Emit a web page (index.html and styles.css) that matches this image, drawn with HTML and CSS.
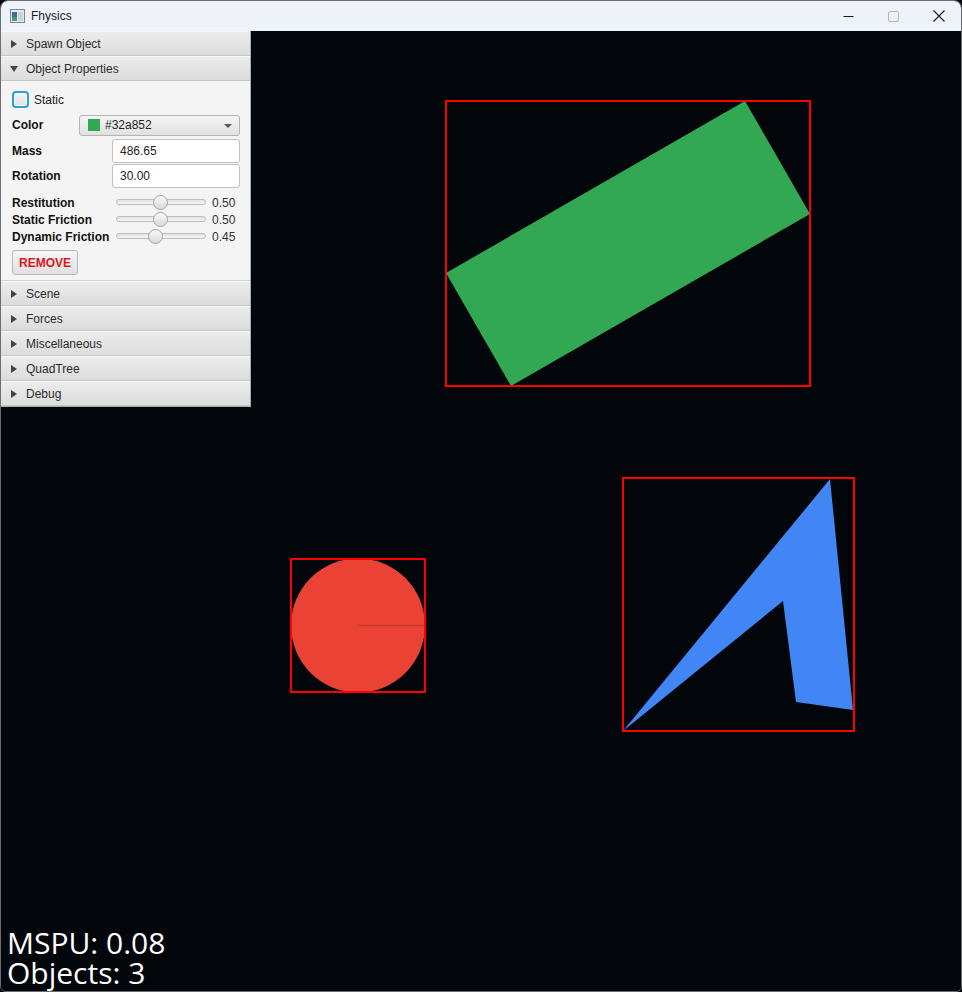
FILE: index.html
```html
<!DOCTYPE html>
<html>
<head>
<meta charset="utf-8">
<link rel="stylesheet" href="styles.css">
</head>
<body>
<div class="window">
  <div class="titlebar">
    <div class="app">
      <svg class="appicon" width="15" height="14" viewBox="0 0 15 14">
        <rect x="0.5" y="0.5" width="14" height="13" fill="#e6eaf0" stroke="#7d8590"/>
        <rect x="2" y="3" width="5" height="9" fill="#3f6e8c"/>
        <rect x="2" y="8" width="5" height="4" fill="#4e9a6a"/>
        <rect x="8" y="3" width="5" height="9" fill="#c9d2dc"/>
      </svg>
      <span class="apptitle">Fhysics</span>
    </div>
    <div class="controls">
      <span class="ctl"><svg width="11" height="11" viewBox="0 0 11 11"><path d="M0.5 5.5H10.5" stroke="#1a1a1a" stroke-width="1"/></svg></span>
      <span class="ctl"><svg width="11" height="11" viewBox="0 0 11 11"><rect x="0.5" y="0.5" width="10" height="10" rx="1.5" fill="none" stroke="#b5b5b5"/></svg></span>
      <span class="ctl"><svg width="12" height="12" viewBox="0 0 12 12"><path d="M0.5 0.5L11.5 11.5M11.5 0.5L0.5 11.5" stroke="#1a1a1a" stroke-width="1.1"/></svg></span>
    </div>
  </div>
  <div class="canvas">
    <svg class="scene" width="960" height="960" viewBox="1 31 960 960">
      <polygon points="446,273 745,101 810,214 511,386" fill="#32a852"/>
      <rect x="446" y="101" width="364" height="285" fill="none" stroke="#ff0000" stroke-width="2"/>
      <circle cx="358" cy="625.5" r="67" fill="#ea4335"/>
      <line x1="358" y1="625.5" x2="425" y2="625.5" stroke="#c33a2e" stroke-width="1.5"/>
      <rect x="291" y="559" width="134" height="133" fill="none" stroke="#ff0000" stroke-width="2"/>
      <polygon points="623,731 830,479 853,710 796,702 783,601" fill="#4285f4"/>
      <rect x="623" y="478" width="231" height="253" fill="none" stroke="#ff0000" stroke-width="2"/>
    </svg>

    <div class="panel">
      <div class="pane-title"><span class="arrow right"></span>Spawn Object</div>
      <div class="pane-title"><span class="arrow down"></span>Object Properties</div>
      <div class="pane-content">
        <div class="check-row">
          <span class="checkbox"></span>
          <span class="check-label">Static</span>
        </div>
        <div class="form-row color-row">
          <span class="lbl">Color</span>
          <div class="picker">
            <span class="swatch"></span>
            <span class="picker-text">#32a852</span>
            <span class="picker-arrow"></span>
          </div>
        </div>
        <div class="form-row field-row">
          <span class="lbl">Mass</span>
          <div class="field">486.65</div>
        </div>
        <div class="form-row field-row">
          <span class="lbl">Rotation</span>
          <div class="field">30.00</div>
        </div>
        <div class="sliders">
          <div class="slider-row">
            <span class="lbl">Restitution</span>
            <div class="slider"><span class="track"></span><span class="thumb" style="left: 37px"></span></div>
            <span class="val">0.50</span>
          </div>
          <div class="slider-row">
            <span class="lbl">Static Friction</span>
            <div class="slider"><span class="track"></span><span class="thumb" style="left: 37px"></span></div>
            <span class="val">0.50</span>
          </div>
          <div class="slider-row">
            <span class="lbl">Dynamic Friction</span>
            <div class="slider"><span class="track"></span><span class="thumb" style="left: 32px"></span></div>
            <span class="val">0.45</span>
          </div>
        </div>
        <button class="remove">REMOVE</button>
      </div>
      <div class="pane-title"><span class="arrow right"></span>Scene</div>
      <div class="pane-title"><span class="arrow right"></span>Forces</div>
      <div class="pane-title"><span class="arrow right"></span>Miscellaneous</div>
      <div class="pane-title"><span class="arrow right"></span>QuadTree</div>
      <div class="pane-title"><span class="arrow right"></span>Debug</div>
    </div>

    <div class="stats">
      <div class="stat">MSPU: 0.08</div>
      <div class="stat">Objects: 3</div>
    </div>
  </div>
</div>
</body>
</html>
```
FILE: styles.css
```css
* { box-sizing: border-box; }
html, body {
  margin: 0;
  padding: 0;
  background: #03060b;
  width: 962px;
  height: 992px;
  overflow: hidden;
}
.window {
  width: 962px;
  height: 992px;
  border: 1px solid #6b6d70;
  border-radius: 8px 8px 6px 6px;
  overflow: hidden;
  display: flex;
  flex-direction: column;
  font-family: "Liberation Sans", Arial, sans-serif;
}
.titlebar {
  height: 30px;
  flex: none;
  background: #eef3fa;
  display: flex;
  align-items: center;
  justify-content: space-between;
}
.app {
  display: flex;
  align-items: center;
  padding-left: 9px;
  gap: 6px;
}
.appicon { display: block; }
.apptitle {
  font-size: 12px;
  color: #1b1b1b;
}
.controls {
  display: flex;
  height: 30px;
}
.ctl {
  width: 45px;
  height: 30px;
  display: flex;
  align-items: center;
  justify-content: center;
}
.ctl svg { display: block; }
.canvas {
  position: relative;
  flex: 1;
  background: #03060b;
}
.scene {
  position: absolute;
  left: 0;
  top: 0;
}
.panel {
  position: absolute;
  left: 0;
  top: 0;
  width: 250px;
  background: #f4f4f4;
  border-right: 1px solid #a9a9a9;
  border-bottom: 1px solid #a9a9a9;
  font-size: 12px;
  color: #111;
}
.pane-title {
  height: 25px;
  display: flex;
  align-items: center;
  padding-left: 10px;
  background: linear-gradient(#ececec, #dcdcdc);
  border-top: 1px solid #f7f7f7;
  border-bottom: 1px solid #c6c6c6;
  color: #2b2b2b;
  font-size: 12px;
}
.arrow {
  width: 0;
  height: 0;
  margin-right: 9px;
}
.arrow.right {
  border-top: 4px solid transparent;
  border-bottom: 4px solid transparent;
  border-left: 6px solid #444;
}
.arrow.down {
  border-left: 4px solid transparent;
  border-right: 4px solid transparent;
  border-top: 6px solid #444;
  margin-left: -1px;
  margin-right: 8px;
}
.pane-content {
  height: 200px;
  padding: 9px 10px 0 11px;
  background: #f4f4f4;
  border-bottom: 1px solid #d2d2d2;
}
.check-row {
  display: flex;
  align-items: center;
  height: 19px;
  gap: 5px;
}
.checkbox {
  width: 17px;
  height: 17px;
  border: 2px solid #2f9fd6;
  border-radius: 4px;
  background: linear-gradient(#f2f2f2, #e2e2e2);
  box-shadow: inset 0 0 0 1px #ffffff;
}
.check-label { color: #222; }
.lbl {
  font-weight: bold;
  color: #111;
}
.form-row {
  display: flex;
  align-items: center;
  justify-content: space-between;
}
.color-row {
  margin-top: 5px;
  height: 22px;
}
.picker {
  width: 161px;
  height: 21px;
  border: 1px solid #b4b4b4;
  border-radius: 3px;
  background: linear-gradient(#f4f4f4, #e1e1e1);
  display: flex;
  align-items: center;
  padding-left: 8px;
  position: relative;
}
.swatch {
  width: 12px;
  height: 12px;
  background: #32a852;
  margin-right: 5px;
}
.picker-text { color: #222; font-size: 12px; }
.picker-arrow {
  position: absolute;
  right: 7px;
  top: 8px;
  width: 0;
  height: 0;
  border-left: 4px solid transparent;
  border-right: 4px solid transparent;
  border-top: 4px solid #555;
}
.field-row {
  height: 25px;
}
.color-row + .field-row { margin-top: 2px; }
.field {
  width: 128px;
  height: 24px;
  border: 1px solid #c0c0c0;
  border-radius: 3px;
  background: #fff;
  padding-left: 7px;
  display: flex;
  align-items: center;
  color: #222;
  font-size: 12px;
}
.sliders {
  margin-top: 6px;
}
.slider-row {
  display: grid;
  grid-template-columns: 104px 96px auto;
  align-items: center;
  height: 17px;
}
.slider {
  position: relative;
  height: 17px;
}
.track {
  position: absolute;
  left: 0;
  top: 5px;
  width: 90px;
  height: 6px;
  border: 1px solid #bdbdbd;
  border-radius: 3px;
  background: linear-gradient(#e4e4e4, #f4f4f4);
}
.thumb {
  position: absolute;
  top: 1px;
  width: 15px;
  height: 15px;
  border-radius: 50%;
  border: 1px solid #a4a4a4;
  background: linear-gradient(#fafafa, #d9d9d9);
}
.val {
  color: #333;
  font-size: 12px;
}
.remove {
  margin-top: 5px;
  width: 66px;
  height: 25px;
  border: 1px solid #b8b8b8;
  border-radius: 3px;
  background: linear-gradient(#f6f6f6, #e0e0e0);
  color: #e0141e;
  font-family: "Liberation Sans", Arial, sans-serif;
  font-weight: bold;
  font-size: 12px;
  padding: 0;
}
.stats {
  position: absolute;
  left: 6px;
  bottom: 3px;
  color: #ffffff;
  font-family: "Open Sans", "Noto Sans", sans-serif;
  font-size: 30px;
  line-height: 30px;
}
.stat {
  height: 30px;
  white-space: nowrap;
}
```
